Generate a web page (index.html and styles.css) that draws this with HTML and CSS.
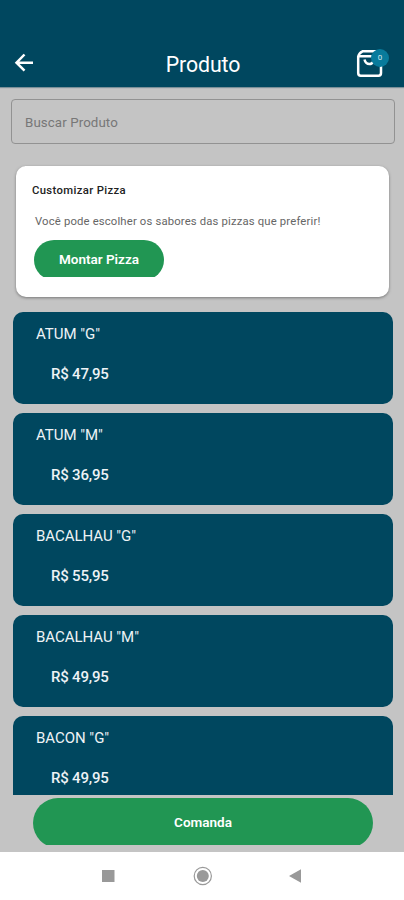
FILE: index.html
```
<!DOCTYPE html>
<html lang="pt-BR">
<head>
<meta charset="utf-8">
<title>Produto</title>
<link rel="stylesheet" href="styles.css">
</head>
<body>
<div class="app">
  <header class="bar">
    <svg class="back" width="20" height="20" viewBox="0 0 20 20"><path d="M10.500 1.500 2.500 9.700l8 8M2.500 9.700H19"/></svg>
    <h1>Produto</h1>
    <div class="cart">
      <svg width="28" height="30" viewBox="0 0 28 30"><path d="M6.500 2.300H22Q25 4 25 7V24Q25 26.700 22.500 26.700H4.700Q2.200 26.700 2.200 24V7.500Q3 4 6.500 2.300ZM3 7.300H18M8.500 10.500Q9.500 15 13.500 15Q16 15 17.500 12.500"/></svg>
      <span class="badge">0</span>
    </div>
  </header>
  <main class="content">
    <input class="search" type="text" placeholder="Buscar Produto">
    <section class="custom">
      <h2>Customizar Pizza</h2>
      <p>Você pode escolher os sabores das pizzas que preferir!</p>
      <div class="clip build"><button>Montar Pizza</button></div>
    </section>
    <div class="list">
      <article class="item"><h3>ATUM "G"</h3><p>R$ 47,95</p></article>
      <article class="item"><h3>ATUM "M"</h3><p>R$ 36,95</p></article>
      <article class="item"><h3>BACALHAU "G"</h3><p>R$ 55,95</p></article>
      <article class="item"><h3>BACALHAU "M"</h3><p>R$ 49,95</p></article>
      <article class="item"><h3>BACON "G"</h3><p>R$ 49,95</p></article>
    </div>
    <div class="clip order"><button>Comanda</button></div>
  </main>
  <nav class="system">
    <svg width="14" height="14" viewBox="0 0 14 14"><path d="M1 1h12.500v12H1z"/></svg>
    <svg width="20" height="20" viewBox="0 0 20 20"><circle class="ring" cx="9.800" cy="10" r="8.600"/><circle cx="9.800" cy="10" r="6"/></svg>
    <svg class="prev" width="14" height="14" viewBox="0 0 14 14"><path d="M1 7 13 .200v13.600z"/></svg>
  </nav>
</div>
</body>
</html>
```
FILE: styles.css
```
* { box-sizing: border-box; }
body, h1, h2, h3, p { margin: 0; font-weight: 400; }
body { font-family: Roboto, "Liberation Sans", sans-serif; }
button { border: 0; font-family: inherit; color: #fff; background: #219653; display: block; }

.app { width: 404px; height: 900px; display: flex; flex-direction: column; overflow: hidden; background: #c4c4c4; }

.bar { height: 87px; flex: none; background: #00475f; color: #fff; padding: 41px 12px 0 14px; display: grid; grid-template-columns: 36px 1fr 36px; align-items: center; box-shadow: 0 1px 1px #7b9099; }
.back, .cart svg { fill: none; stroke: #fff; stroke-width: 2.5; }
.bar h1 { font-size: 21.300px; text-align: center; letter-spacing: -.1px; }
.back { margin-top: -3px; }
.cart { position: relative; height: 34px; margin-top: 4px; }
.cart svg { display: block; }
.badge { position: absolute; left: 15px; top: 0; width: 18px; height: 18px; border-radius: 50%; background: #087b9c; font-size: 8px; line-height: 18px; text-align: center; color: #d5e8ee; }

.content { flex: none; height: 765px; display: flex; flex-direction: column; padding: 12px 0 0; }
.search { flex: none; width: 384px; height: 45px; margin-left: 11px; border: 1.500px solid #929292; border-radius: 4px; background: transparent; padding: 2px 13px 0; font: 13.300px Roboto, sans-serif; letter-spacing: .1px; }
.search::placeholder { color: #777; opacity: 1; }

.custom { flex: none; width: 373px; height: 131px; margin: 22px 0 0 16px; padding: 18px 16px 0; background: #fff; border-radius: 10px; box-shadow: 0 1px 3px #777; }
.custom h2 { font-size: 11.300px; line-height: 14px; font-weight: 500; color: #222; letter-spacing: .35px; }
.custom p { margin: 17px 0 0 3px; font-size: 11.300px; line-height: 14px; color: #666; letter-spacing: .16px; white-space: nowrap; }
.clip { overflow: hidden; flex: none; }
.build { width: 130px; height: 37px; margin: 11px 0 0 2px; }
.build button { width: 130px; height: 40px; padding: 0 0 3px; border-radius: 20px; font-size: 13.500px; font-weight: 600; }

.list { flex: none; height: 483px; margin-top: 15px; padding: 0 11px 0 13px; overflow: hidden; display: flex; flex-direction: column; gap: 9px; }
.item { flex: none; height: 92px; border-radius: 10px; background: #00475f; color: #eef3f6; padding: 11.500px 23px 0; }
.item h3 { font-size: 15px; line-height: 20px; letter-spacing: -.03px; }
.item p { margin: 20px 0 0 15px; font-size: 15px; line-height: 20px; font-weight: 500; letter-spacing: -.2px; }

.order { width: 340px; height: 47px; margin: 3px 0 0 33px; }
.order button { width: 340px; height: 50px; padding: 0 0 3px; border-radius: 25px; font-size: 13.500px; font-weight: 600; }

.system { flex: 1; background: #fff; display: flex; align-items: center; gap: 78px; padding: 0 0 1px 101px; }
.system svg { fill: #999; }
.system .ring { fill: none; stroke: #999; stroke-width: 1.200; }
.system .prev { margin-left: -3px; }
```
